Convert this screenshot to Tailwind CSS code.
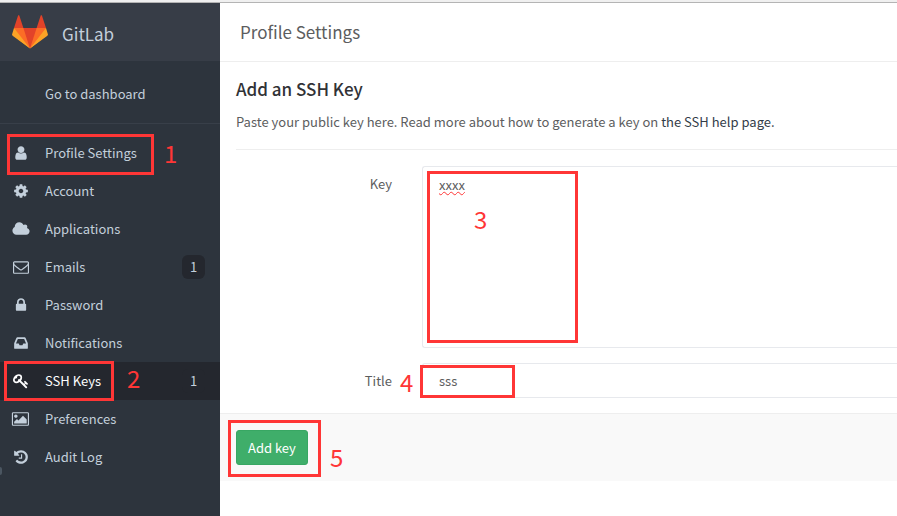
<!DOCTYPE html>
<html lang="en">
<head>
    <meta charset="UTF-8">
    <meta name="viewport" content="width=device-width, initial-scale=1.0">
    <title>Profile Settings - GitLab</title>
    <script src="https://cdn.jsdelivr.net/npm/@tailwindcss/browser@4"></script>
</head>
<body class="relative flex flex-col min-h-screen overflow-x-hidden bg-white font-['Noto_Sans_CJK_SC',sans-serif] text-[13px] leading-5 text-[#5c5d5e]">
    <div class="h-[3px] bg-[#f0f0f0] border-b border-[#b4b4b4]"></div>

    <div class="flex flex-1">
        <!-- Sidebar -->
        <aside class="relative w-[220px] shrink-0 bg-[#2d343d] text-[#c3cfdb]">
            <a href="#" class="flex items-center h-[58px] pl-3 gap-[14px] bg-[#373d47] text-[17px] text-[#c3cfdb]">
                <svg class="size-9" viewBox="0 0 36 36">
                    <path fill="#e24329" d="M2 14l9.38 9v-9l-4-12.28c-.205-.632-1.176-.632-1.38 0z"/>
                    <path fill="#e24329" d="M34 14l-9.38 9v-9l4-12.28c.205-.632 1.176-.632 1.38 0z"/>
                    <path fill="#e24329" d="M18 34.38L3 14h30z"/>
                    <path fill="#fc6d26" d="M18 34.38L11.38 14H2l4 11z"/>
                    <path fill="#fc6d26" d="M18 34.38L24.62 14H34l-4 11z"/>
                    <path fill="#fca326" d="M2 14L.1 20.16c-.18.565 0 1.2.5 1.56l17.42 12.66z"/>
                    <path fill="#fca326" d="M34 14l1.9 6.16c.18.565 0 1.2-.5 1.56L18 34.38z"/>
                </svg>
                <span class="pt-1">GitLab</span>
            </a>

            <nav>
                <div class="pt-[14px] pb-[10px] mb-[10px] border-b border-[#383f49]">
                    <a href="#" class="flex items-center h-[38px] pl-[45px]">Go to dashboard</a>
                </div>
                <ul>
                    <li><a href="#" class="flex items-center h-[38px] pl-[11px] pr-[15px] gap-[14px]">
                        <svg class="w-5 h-4" viewBox="0 0 1792 1792" fill="currentColor"><path d="M1536 1399q0 109-62.5 187t-150.5 78h-854q-88 0-150.5-78t-62.5-187q0-85 8.5-160.5t31.5-152 58.5-131 94-89 134.5-34.5q131 128 313 128t313-128q76 0 134.5 34.5t94 89 58.5 131 31.5 152 8.5 160.5zm-256-887q0 159-112.5 271.5t-271.5 112.5-271.5-112.5-112.5-271.5 112.5-271.5 271.5-112.5 271.5 112.5 112.5 271.5z"/></svg>
                        <span>Profile Settings</span>
                    </a></li>
                    <li><a href="#" class="flex items-center h-[38px] pl-[11px] pr-[15px] gap-[14px]">
                        <svg class="w-5 h-4" viewBox="0 0 1792 1792" fill="currentColor"><path d="M1152 896q0-106-75-181t-181-75-181 75-75 181 75 181 181 75 181-75 75-181zm512-109v222q0 12-8 23t-20 13l-185 28q-19 54-39 91 35 50 107 138 10 12 10 25t-9 23q-27 37-99 108t-94 71q-12 0-26-9l-138-108q-44 23-91 38-16 136-29 186-7 28-36 28h-222q-14 0-24.5-8.5t-11.5-21.5l-28-184q-49-16-90-37l-141 107q-10 9-25 9-14 0-25-11-126-114-165-168-7-10-7-23 0-12 8-23 15-21 51-66.5t54-70.5q-27-50-41-99l-183-27q-13-2-21-12.5t-8-23.5v-222q0-12 8-23t19-13l186-28q14-46 39-92-40-57-107-138-10-12-10-24 0-10 9-23 26-36 98.5-107.5t94.5-71.5q13 0 26 10l138 107q44-23 91-38 16-136 29-186 7-28 36-28h222q14 0 24.5 8.5t11.5 21.5l28 184q49 16 90 37l142-107q9-9 24-9 13 0 25 10 129 119 165 170 7 8 7 22 0 12-8 23-15 21-51 66.5t-54 70.5q26 50 41 98l183 28q13 2 21 12.5t8 23.5z"/></svg>
                        <span>Account</span>
                    </a></li>
                    <li><a href="#" class="flex items-center h-[38px] pl-[11px] pr-[15px] gap-[14px]">
                        <svg class="w-5 h-4" viewBox="0 0 2048 1792" fill="currentColor"><path d="M1984 1152q0 159-112.5 271.5t-271.5 112.5h-1088q-185 0-316.5-131.5t-131.5-316.5q0-132 71-241.5t187-163.5q-2-28-2-43 0-212 150-362t362-150q158 0 286.5 88t187.5 230q70-62 166-62 106 0 181 75t75 181q0 75-41 138 129 30 213 134.5t84 239.5z"/></svg>
                        <span>Applications</span>
                    </a></li>
                    <li><a href="#" class="flex items-center h-[38px] pl-[11px] pr-[15px] gap-[14px]">
                        <svg class="w-5 h-4" viewBox="0 0 1792 1792" fill="currentColor"><path d="M1664 1504v-768q-32 36-69 66-268 206-426 338-51 43-83 67t-86.5 48.5-102.5 24.5h-2q-48 0-102.5-24.5t-86.5-48.5-83-67q-158-132-426-338-37-30-69-66v768q0 13 9.5 22.5t22.5 9.5h1472q13 0 22.5-9.5t9.5-22.5zm0-1051v-24.5l-.5-13-3-12.5-5.5-9-9-7.5-14-2.5h-1472q-13 0-22.5 9.5t-9.5 22.5q0 168 147 284 193 152 401 317 6 5 35 29.5t46 37.5 44.5 31.5 50.5 27.5 43 9h2q20 0 43-9t50.5-27.5 44.5-31.5 46-37.5 35-29.5q208-165 401-317 54-43 100.5-115.5t46.5-131.5zm128-37v1088q0 66-47 113t-113 47h-1472q-66 0-113-47t-47-113v-1088q0-66 47-113t113-47h1472q66 0 113 47t47 113z"/></svg>
                        <span>Emails</span>
                        <span class="ml-auto w-[23px] h-6 leading-6 rounded-md bg-[#24272e] text-center">1</span>
                    </a></li>
                    <li><a href="#" class="flex items-center h-[38px] pl-[11px] pr-[15px] gap-[14px]">
                        <svg class="w-5 h-4" viewBox="0 0 1792 1792" fill="currentColor"><path d="M640 768h512v-192q0-106-75-181t-181-75-181 75-75 181v192zm832 96v576q0 40-28 68t-68 28h-960q-40 0-68-28t-28-68v-576q0-40 28-68t68-28h32v-192q0-184 132-316t316-132 316 132 132 316v192h32q40 0 68 28t28 68z"/></svg>
                        <span>Password</span>
                    </a></li>
                    <li><a href="#" class="flex items-center h-[38px] pl-[11px] pr-[15px] gap-[14px]">
                        <svg class="w-5 h-4" viewBox="0 0 1792 1792" fill="currentColor"><path d="M1151 960h316q-1-3-2.5-8t-2.5-8l-212-496h-708l-212 496q-1 2-2.5 8t-2.5 8h316l95 192h320zm513 30v482q0 26-19 45t-45 19h-1408q-26 0-45-19t-19-45v-482q0-62 25-123l238-552q10-25 36.5-42t52.5-17h832q26 0 52.5 17t36.5 42l238 552q25 61 25 123z"/></svg>
                        <span>Notifications</span>
                    </a></li>
                    <li><a href="#" class="flex items-center h-[38px] pl-[11px] pr-[15px] gap-[14px] bg-[#24272e] text-white">
                        <svg class="w-5 h-4" viewBox="0 0 1792 1792" fill="currentColor"><path d="M832 512q0-80-56-136t-136-56-136 56-56 136q0 42 19 83-41-19-83-19-80 0-136 56t-56 136 56 136 136 56 136-56 56-136q0-42-19-83 41 19 83 19 80 0 136-56t56-136zm851 704q0 17-49 66t-66 49q-9 0-28.5-16t-36.5-33-38.5-40-24.5-26l-96 96 220 220q28 28 28 68 0 42-39 81t-81 39q-40 0-68-28l-671-671q-176 131-365 131-163 0-265.5-102.5t-102.5-265.5q0-160 95-313t248-248 313-95q163 0 265.5 102.5t102.5 265.5q0 189-131 365l355 355 96-96q-3-3-26-24.5t-40-38.5-33-36.5-16-28.5q0-17 49-66t66-49q13 0 23 10 6 6 46 44.5t82 79.5 86.5 86 73 78 28.5 41z"/></svg>
                        <span>SSH Keys</span>
                        <span class="ml-auto w-[23px] h-6 leading-6 rounded-md bg-[#24272e] text-center text-[#c3cfdb]">1</span>
                    </a></li>
                    <li><a href="#" class="flex items-center h-[38px] pl-[11px] pr-[15px] gap-[14px]">
                        <svg class="w-5 h-4" viewBox="0 0 1920 1792" fill="currentColor"><path d="M576 576q0 80-56 136t-136 56-136-56-56-136 56-136 136-56 136 56 56 136zm1024 384v448h-1408v-192l320-320 160 160 512-512zm96-704h-1600q-13 0-22.5 9.5t-9.5 22.5v1216q0 13 9.5 22.5t22.5 9.5h1600q13 0 22.5-9.5t9.5-22.5v-1216q0-13-9.5-22.5t-22.5-9.5zm160 32v1216q0 66-47 113t-113 47h-1600q-66 0-113-47t-47-113v-1216q0-66 47-113t113-47h1600q66 0 113 47t47 113z"/></svg>
                        <span>Preferences</span>
                    </a></li>
                    <li><a href="#" class="flex items-center h-[38px] pl-[11px] pr-[15px] gap-[14px]">
                        <svg class="w-5 h-4" viewBox="0 0 1792 1792" fill="currentColor"><path d="M1664 896q0 156-61 298t-164 245-245 164-298 61q-172 0-327-72.5t-264-204.5q-7-10-6.5-22.5t8.5-20.5l137-138q10-9 25-9 16 2 23 12 73 95 179 147t225 52q104 0 198.5-40.5t163.5-109.5 109.5-163.5 40.5-198.5-40.5-198.5-109.5-163.5-163.5-109.5-198.5-40.5q-98 0-188 35.5t-160 101.5l137 138q31 30 14 69-17 40-59 40h-448q-26 0-45-19t-19-45v-448q0-42 40-59 39-17 69 14l130 129q107-101 244.5-156.5t284.5-55.5q156 0 298 61t245 164 164 245 61 298zm-640-288v448q0 14-9 23t-23 9h-320q-14 0-23-9t-9-23v-64q0-14 9-23t23-9h224v-352q0-14 9-23t23-9h64q14 0 23 9t9 23z"/></svg>
                        <span>Audit Log</span>
                    </a></li>
                </ul>
            </nav>
            <div class="absolute left-0 top-[464px] w-[2px] h-2 rounded-r-full bg-[#4b5661]"></div>
        </aside>

        <!-- Content -->
        <main class="flex-1 min-w-0">
            <header class="flex items-center h-[59px] pl-5 border-b border-[#eeeeee] text-[17px]">Profile Settings</header>

            <form>
                <div class="pl-4 pt-4 pb-[15px]">
                    <h1 class="text-[17px] leading-[22px] font-medium text-[#313236]">Add an SSH Key</h1>
                    <p class="mt-3 pb-[17px] border-b border-[#eeeeee]">Paste your public key here. Read more about how to generate a key on <a href="#" class="text-[#333c48]">the SSH help page.</a></p>

                    <div class="flex mt-4">
                        <label for="key" class="w-[156px] mr-[30px] pt-2 text-right">Key</label>
                        <textarea id="key" spellcheck="false" class="flex-1 min-w-0 h-[182px] pl-4 pt-2 border border-r-0 border-[#e7e9ed] rounded-l-[3px] resize-none outline-none underline decoration-wavy decoration-1 decoration-[#ff3636]">xxxx</textarea>
                    </div>
                    <div class="flex mt-[15px]">
                        <label for="title" class="w-[156px] mr-[30px] pt-2 text-right">Title</label>
                        <input id="title" type="text" value="sss" class="flex-1 min-w-0 h-[35px] pl-4 border border-r-0 border-[#e7e9ed] rounded-l-[3px] outline-none">
                    </div>
                </div>
                <div class="pl-4 py-4 border-t border-[#eeeeee] bg-[#f9f9f9]">
                    <button type="submit" class="block h-[35px] px-[11px] border border-[#38a763] rounded-[3px] bg-[#3fae6a] text-white">Add key</button>
                </div>
            </form>
        </main>
    </div>

    <!-- Step markers -->
    <div class="text-[24px] leading-6 text-[#ff3636]">
        <div class="absolute left-[7px] top-[134px] w-[147px] h-[41px] border-3 border-[#ff3636]"></div>
        <span class="absolute left-[164px] top-[141px]">1</span>
        <div class="absolute left-[4px] top-[361px] w-[110px] h-[40px] border-3 border-[#ff3636]"></div>
        <span class="absolute left-[127px] top-[366px]">2</span>
        <div class="absolute left-[427px] top-[171px] w-[151px] h-[172px] border-3 border-[#ff3636]"></div>
        <span class="absolute left-[474px] top-[207px]">3</span>
        <div class="absolute left-[420px] top-[365px] w-[95px] h-[33px] border-3 border-[#ff3636]"></div>
        <span class="absolute left-[400px] top-[370px]">4</span>
        <div class="absolute left-[228px] top-[420px] w-[93px] h-[57px] border-3 border-[#ff3636]"></div>
        <span class="absolute left-[330px] top-[445px]">5</span>
    </div>
</body>
</html>
